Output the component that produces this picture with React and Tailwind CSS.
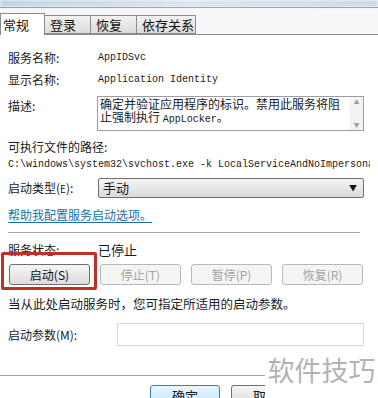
import React from 'react'

const cjk = { fontFamily: '"Noto Sans CJK SC", "Liberation Sans", sans-serif' }
const mono = { fontFamily: '"Liberation Mono", "Noto Sans CJK SC", monospace' }

function Tab({ label, active, width }) {
  if (active) {
    return (
      <div className={`relative z-10 -mb-px flex h-[22px] ${width} items-center border border-b-0 border-[#898c95] bg-white pl-[2px] text-[13px] text-[#111]`}>
        {label}
      </div>
    )
  }
  return (
    <div className={`-ml-px flex h-[19px] ${width} items-center border border-[#898c95] bg-gradient-to-b from-[#f2f2f2] to-[#dcdcdc] pl-[5px] text-[13px] text-[#111]`}>
      {label}
    </div>
  )
}

function WinButton({ label, disabled }) {
  return (
    <div
      className={
        disabled
          ? 'flex h-[21px] w-[81px] items-center justify-center rounded-[3px] border border-[#b5b9bc] bg-[#f4f4f4] text-[12px] text-[#a3a3a3]'
          : 'flex h-[21px] w-[81px] items-center justify-center rounded-[3px] border border-[#707070] bg-gradient-to-b from-[#f6f6f6] to-[#dcdcdc] text-[12px] text-[#111]'
      }
    >
      {label}
    </div>
  )
}

export default function App() {
  return (
    <div className="relative h-[398px] w-[378px] overflow-hidden bg-white text-[12px] leading-[16px] text-[#1a1a1a]" style={cjk}>
      {/* title strip */}
      <div className="h-[7px] bg-gradient-to-r from-[#c4d4e4] via-[#dde6ee] to-[#cfdbe7] blur-[1px]" />
      <div className="h-px bg-[#7b8a99]" />

      {/* tabs */}
      <div className="flex h-[26px] items-end bg-[#f7f7f7]">
        <Tab label="常规" active width="w-[45px]" />
        <Tab label="登录" width="w-[47px]" />
        <Tab label="恢复" width="w-[47px]" />
        <Tab label="依存关系" width="w-[60px]" />
      </div>
      <div className="h-px bg-[#898c95]" />

      <div className="px-[8px]">
        <div className="mt-[15px] flex">
          <span className="w-[90px]">服务名称:</span>
          <span className="text-[10px]" style={mono}>AppIDSvc</span>
        </div>
        <div className="mt-[6px] flex">
          <span className="w-[90px]">显示名称:</span>
          <span className="text-[10px]" style={mono}>Application Identity</span>
        </div>

        <div className="mt-[8px] flex">
          <span className="mt-[2px] w-[89px]">描述:</span>
          <div className="flex h-[35px] w-[267px] border border-[#9a9fa6] bg-white">
            <div className="flex-1 pl-[2px] text-[12px] leading-[13px]">
              确定并验证应用程序的标识。禁用此服务将阻止强制执行 <span className="text-[10px] leading-[13px]" style={mono}>AppLocker</span>。
            </div>
            <div className="flex w-[13px] flex-col items-center justify-between bg-[#f3f3f3] py-[2px] text-[6px] leading-[6px] text-[#9aa0a8]">
              <span>▲</span>
              <span>▼</span>
            </div>
          </div>
        </div>

        <div className="mt-[8px]">可执行文件的路径:</div>
        <div className="mt-[2px] overflow-hidden whitespace-nowrap text-[10px]" style={mono}>
          C:\windows\system32\svchost.exe -k LocalServiceAndNoImpersonation
        </div>

        <div className="mt-[5px] flex items-center">
          <span className="w-[90px]">启动类型(<span className="text-[10px]">E</span>):</span>
          <div className="flex h-[20px] w-[266px] items-center justify-between rounded-[2px] border border-[#707070] bg-gradient-to-b from-[#f4f4f4] to-[#dadada] pl-[4px] pr-[6px]">
            <span className="text-[13px]">手动</span>
            <span className="text-[8px] text-[#111]">▼</span>
          </div>
        </div>

        <div className="mt-[9px] text-[#1d6fa0] underline underline-offset-2">帮助我配置服务启动选项。</div>

        <div className="mt-[9px] mr-[10px] h-px bg-[#a8a8a8]" />

        <div className="mt-[9px] flex">
          <span className="w-[90px]">服务状态:</span>
          <span className="text-[13px]">已停止</span>
        </div>

        <div className="mt-[6px] flex w-[355px] justify-between pl-px">
          <WinButton label="启动(S)" />
          <WinButton label="停止(T)" disabled />
          <WinButton label="暂停(P)" disabled />
          <WinButton label="恢复(R)" disabled />
        </div>

        <div className="mt-[11px] text-[12.5px]">当从此处启动服务时，您可指定所适用的启动参数。</div>

        <div className="mt-[11px] flex items-center">
          <span className="w-[109px]">启动参数(M):</span>
          <div className="h-[23px] w-[247px] border border-[#d5d8dc] bg-white" />
        </div>
      </div>

      <div className="mt-[29px] h-px bg-[#a0a0a0]" />
      <div className="mt-[9px] flex pl-[150px]">
        <div className="flex h-[22px] w-[70px] items-center justify-center rounded-[3px] border border-[#3c7fb1] bg-gradient-to-b from-[#eaf6fd] to-[#bee6fd] text-[13px]">
          确定
        </div>
        <div className="ml-[11px] flex h-[22px] w-[70px] items-center justify-center rounded-[3px] border border-[#707070] bg-gradient-to-b from-[#f6f6f6] to-[#dcdcdc] text-[13px]">
          取消
        </div>
      </div>

      {/* red highlight around start button */}
      <div className="pointer-events-none absolute left-[1px] top-[252px] h-[38px] w-[96px] rounded-[2px] border-[3px] border-[#c0302a]" />

      {/* watermark */}
      <div className="absolute left-[265px] top-[354px] flex h-[44px] w-[113px] items-start justify-center bg-white pt-[1px] text-[27px] leading-[30px] text-[#b3b3b3]">
        软件技巧
      </div>
    </div>
  )
}
